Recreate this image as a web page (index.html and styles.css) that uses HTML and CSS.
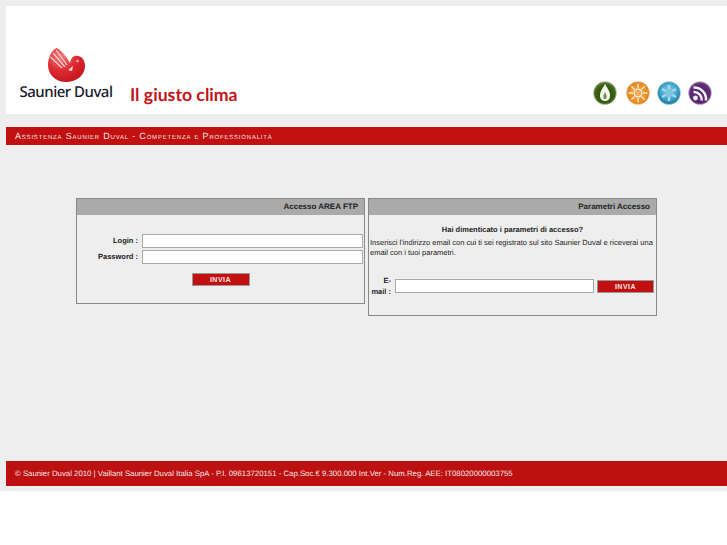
FILE: index.html
```html
<!DOCTYPE html>
<html lang="it">
<head>
    <meta charset="UTF-8">
    <title>Assistenza Saunier Duval</title>
    <link rel="stylesheet" href="styles.css">
</head>
<body>

    <div class="wrapper">
        <div class="header">
            <div class="logo">
                <svg class="logo-mark" width="39" height="36" viewBox="0 0 39 36">
                    <defs>
                        <radialGradient id="ball" cx="35%" cy="25%" r="85%">
                            <stop offset="0" stop-color="#ee7f80"/>
                            <stop offset="0.5" stop-color="#dc2a30"/>
                            <stop offset="1" stop-color="#c0121a"/>
                        </radialGradient>
                    </defs>
                    <path d="M9.700 1C6 2 1 9 1 18C1 28 9 35 19 35C30 35 38 28 38 19C38 12 34 8.700 29.700 8.700C26 8.700 24 11 23 16C20 10 14 3 9.700 1Z" fill="url(#ball)"/>
                    <path d="M9 3L20 18M6 6L18 20M3.500 10L15 21" stroke="#f7cfcf" stroke-width="1.200" fill="none"/>
                    <path d="M21 23L26 19L25 24Z" fill="#f6dcdc"/>
                    <circle cx="30.500" cy="14" r="1.500" fill="#f09a9a"/>
                </svg>
                <span class="logo-name">Saunier Duval</span>
            </div>
            <div class="slogan">Il giusto clima</div>
            <div class="icons">
                <svg class="icon icon-first" width="24" height="24" viewBox="0 0 24 24">
                    <defs>
                        <radialGradient id="green" cx="50%" cy="55%" r="55%">
                            <stop offset="0" stop-color="#27480a"/>
                            <stop offset="0.75" stop-color="#3c6212"/>
                            <stop offset="1" stop-color="#6f9150"/>
                        </radialGradient>
                    </defs>
                    <circle cx="12" cy="12" r="11.500" fill="url(#green)" stroke="#c9d3bd" stroke-width="0.600"/>
                    <path d="M12 3C14.500 7.500 17.500 11 17 15.500C16.500 21.500 7.500 21.500 7 15.500C6.500 11 9.500 7.500 12 3Z" fill="#f2f4ea"/>
                    <path d="M12 11C13 13.500 14 14.500 13.500 16.500C13 18.500 11 18.500 10.500 16.500C10 14.500 11 13.500 12 11Z" fill="#6d8a4e"/>
                </svg>
                <svg class="icon" width="24" height="24" viewBox="0 0 24 24">
                    <defs>
                        <radialGradient id="orange" cx="50%" cy="50%" r="55%">
                            <stop offset="0" stop-color="#f6b45f"/>
                            <stop offset="0.8" stop-color="#e6871c"/>
                            <stop offset="1" stop-color="#c96e10"/>
                        </radialGradient>
                    </defs>
                    <circle cx="12" cy="12" r="11.500" fill="url(#orange)" stroke="#f4dcc0" stroke-width="0.600"/>
                    <circle cx="12" cy="12" r="3.800" fill="none" stroke="#fdeed8" stroke-width="1.300"/>
                    <path d="M12 2.500V7M12 17V21.500M2.500 12H7M17 12H21.500M5.300 5.300L8.500 8.500M15.500 15.500L18.700 18.700M18.700 5.300L15.500 8.500M8.500 15.500L5.300 18.700" stroke="#fdeed8" stroke-width="1.300"/>
                </svg>
                <svg class="icon" width="24" height="24" viewBox="0 0 24 24">
                    <defs>
                        <radialGradient id="blue" cx="50%" cy="42%" r="60%">
                            <stop offset="0" stop-color="#8ed2ea"/>
                            <stop offset="0.65" stop-color="#3b9fc6"/>
                            <stop offset="1" stop-color="#0c6a93"/>
                        </radialGradient>
                    </defs>
                    <circle cx="12" cy="12" r="11.500" fill="url(#blue)" stroke="#bcdde9" stroke-width="0.600"/>
                    <path d="M12 4V20M5 8L19 16M19 8L5 16" stroke="#a9daec" stroke-width="2.400"/>
                    <circle cx="12" cy="12" r="4" fill="#7cc6e2"/>
                </svg>
                <svg class="icon" width="24" height="24" viewBox="0 0 24 24">
                    <defs>
                        <radialGradient id="purple" cx="50%" cy="55%" r="55%">
                            <stop offset="0" stop-color="#4d2062"/>
                            <stop offset="0.8" stop-color="#5e2c74"/>
                            <stop offset="1" stop-color="#8d6a9d"/>
                        </radialGradient>
                    </defs>
                    <circle cx="12" cy="12" r="11.500" fill="url(#purple)" stroke="#d5c9db" stroke-width="0.600"/>
                    <circle cx="7.500" cy="17" r="2.400" fill="#f3edf5"/>
                    <path d="M5.500 11A7.500 7.500 0 0 1 13.500 19.500M5.500 6.500A12 12 0 0 1 18 19.500" fill="none" stroke="#f3edf5" stroke-width="2.500"/>
                </svg>
            </div>
        </div>

        <div class="title-bar">Assistenza Saunier Duval - Competenza e Professionalità</div>

        <div class="content">
            <div class="panel">
                <div class="panel-title">Accesso AREA FTP</div>
                <form class="login-body" onsubmit="return false">
                    <div class="field">
                        <label for="login">Login :</label>
                        <input type="text" id="login">
                    </div>
                    <div class="field">
                        <label for="password">Password :</label>
                        <input type="password" id="password">
                    </div>
                    <div class="submit-row">
                        <input type="submit" class="btn btn-login" value="INVIA">
                    </div>
                </form>
            </div>

            <div class="panel">
                <div class="panel-title">Parametri Accesso</div>
                <form class="reset-body" onsubmit="return false">
                    <p class="question">Hai dimenticato i parametri di accesso?</p>
                    <p class="hint">Inserisci l'indirizzo email con cui ti sei registrato sul sito Saunier Duval e riceverai una email con i tuoi parametri.</p>
                    <div class="email-row">
                        <label for="email">E-mail :</label>
                        <input type="text" id="email">
                        <input type="submit" class="btn btn-reset" value="INVIA">
                    </div>
                </form>
            </div>
        </div>

        <div class="footer">© Saunier Duval 2010 | Vaillant Saunier Duval Italia SpA - P.I. 09613720151 - Cap.Soc.€ 9.300.000 Int.Ver - Num.Reg. AEE: IT08020000003755</div>
    </div>

</body>
</html>
```

FILE: styles.css
```css
body {
    margin: 0;
    background-color: #fff;
    font-family: "Liberation Sans", Arial, sans-serif;
    font-size: 7.500px;
    color: #222;
    text-rendering: geometricPrecision;
}

.wrapper {
    background-color: #eee;
    padding: 6px 0 5px 6px;
}

.header {
    background-color: #fff;
    height: 108px;
    display: flex;
    align-items: flex-end;
}

.logo {
    width: 120px;
    margin-right: 4px;
    display: flex;
    flex-direction: column;
    align-items: center;
    padding: 0 0 13px 0;
}

.logo-name {
    font-family: "Noto Sans", sans-serif;
    font-size: 15px;
    font-weight: 500;
    line-height: 18px;
    letter-spacing: -0.5px;
    color: #1a1a2c;
    white-space: nowrap;
}

.slogan {
    font-family: Lato, sans-serif;
    font-size: 17.700px;
    font-weight: 700;
    line-height: 24px;
    color: #c1151b;
    padding-bottom: 7px;
}

.icons {
    margin-left: auto;
    display: flex;
    gap: 7px;
    padding: 0 15px 9px 0;
}

.icon-first {
    margin-right: 2px;
}

.title-bar {
    margin-top: 13px;
    height: 18px;
    line-height: 18px;
    padding-left: 9px;
    background-color: #c1100f;
    color: #f5e6e6;
    font-size: 9px;
    font-variant: small-caps;
    letter-spacing: 0.8px;
}

.content {
    height: 316px;
    padding: 53px 0 0 70px;
    box-sizing: border-box;
    display: flex;
    align-items: flex-start;
    gap: 3px;
}

.panel {
    width: 289px;
    box-sizing: border-box;
    border: 1px solid #888;
}

.panel-title {
    height: 16px;
    line-height: 16px;
    background-color: #aaa;
    text-align: right;
    padding-right: 6px;
    font-weight: bold;
    font-size: 8px;
}

.login-body {
    box-sizing: border-box;
    height: 88px;
    padding-top: 18px;
}

.field {
    display: flex;
    align-items: center;
    height: 15px;
    margin-bottom: 1px;
}

label {
    font-weight: bold;
}

.field label {
    width: 61px;
    text-align: right;
    margin-right: 4px;
}

input[type="text"],
input[type="password"] {
    box-sizing: border-box;
    height: 14px;
    padding: 0 2px;
    border: 1px solid #aaa;
    background-color: #fff;
}

.field input {
    width: 221px;
}

.submit-row {
    margin-top: 9px;
    text-align: center;
}

.btn {
    box-sizing: border-box;
    height: 13px;
    padding: 0;
    border: 1px solid #999;
    background-color: #c1100f;
    color: #f5e6e6;
    font-family: "Liberation Sans", Arial, sans-serif;
    font-size: 7px;
    font-weight: bold;
    letter-spacing: 0.5px;
}

.btn-login {
    width: 58px;
}

.btn-reset {
    width: 57px;
    margin-left: 3px;
}

.reset-body {
    box-sizing: border-box;
    height: 100px;
    padding: 10px 1px 0 1px;
}

.question {
    margin: 0 0 3px 0;
    text-align: center;
    font-weight: bold;
    line-height: 10px;
}

.hint {
    margin: 0;
    line-height: 10px;
}

.email-row {
    display: flex;
    align-items: center;
    margin-top: 17px;
}

.email-row label {
    width: 21px;
    text-align: right;
    margin-right: 4px;
    line-height: 11px;
}

.email-row input[type="text"] {
    width: 199px;
}

.footer {
    height: 25px;
    line-height: 25px;
    padding-left: 9px;
    background-color: #bd1010;
    color: #f5e6e6;
    font-size: 7.800px;
    white-space: nowrap;
}
```
